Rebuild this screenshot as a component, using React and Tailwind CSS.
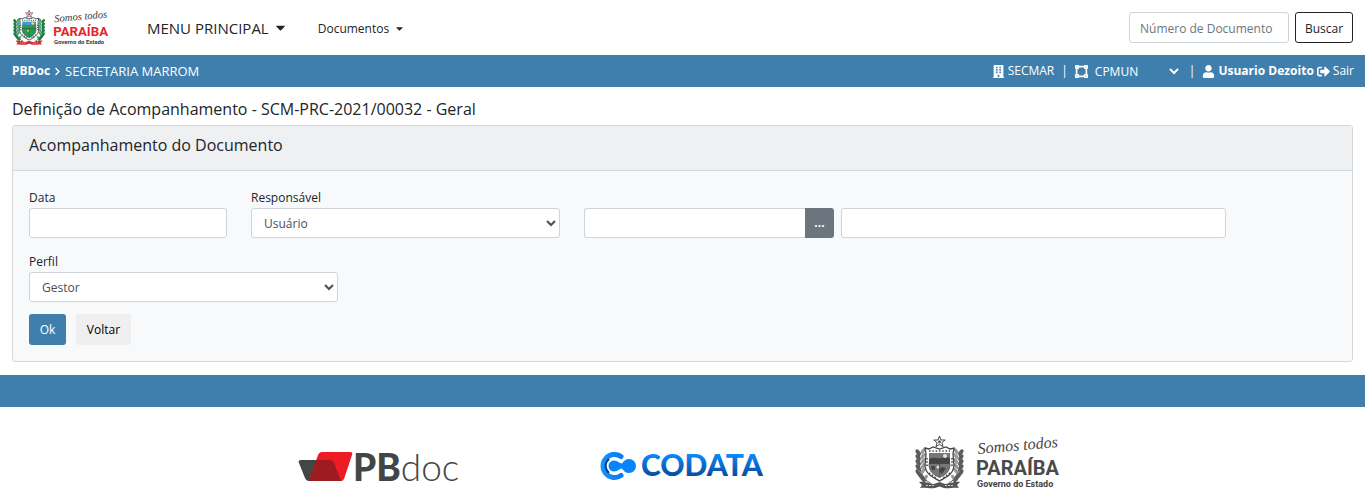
import { useState } from "react";
import {
  FaBuilding,
  FaCaretDown,
  FaChevronRight,
  FaSignOutAlt,
  FaUser,
  FaVectorSquare,
} from "react-icons/fa";

const fieldClass =
  "h-[30px] rounded-[3px] border border-[#ced4da] bg-white px-2 text-xs text-[#495057] outline-none focus:border-[#80bdff]";

export default function App() {
  const [form, setForm] = useState({
    data: "",
    responsavel: "usuario",
    sigla: "",
    nome: "",
    perfil: "gestor",
  });

  const update = (e) =>
    setForm((prev) => ({ ...prev, [e.target.name]: e.target.value }));

  return (
    <div className="min-h-screen bg-white font-['Open_Sans','Noto_Sans',sans-serif] text-xs leading-5 text-[#212529]">
      <Header />
      <UserBar />

      {/* ------------------- CONTENT ------------------- */}
      <main className="px-3 pt-[11px] pb-[13px]">
        <h1 className="mb-[5px] text-base leading-[22px] font-medium">
          Definição de Acompanhamento - SCM-PRC-2021/00032 - Geral
        </h1>

        <section className="rounded-[3px] border border-[#d5d8db] bg-[#f8f9fb]">
          <div className="border-b border-[#d5d8db] bg-[#eff0f2] px-4 pt-2 pb-[14px]">
            <h2 className="text-base leading-[22px] font-medium">
              Acompanhamento do Documento
            </h2>
          </div>

          <form className="px-4 pt-4 pb-4" onSubmit={(e) => e.preventDefault()}>
            <div className="flex flex-wrap items-end gap-x-6 gap-y-3">
              <Field label="Data" id="data" className="w-[198px]">
                <input
                  id="data"
                  name="data"
                  value={form.data}
                  onChange={update}
                  className={fieldClass}
                />
              </Field>

              <Field label="Responsável" id="responsavel" className="w-[309px]">
                <select
                  id="responsavel"
                  name="responsavel"
                  value={form.responsavel}
                  onChange={update}
                  className={fieldClass}
                >
                  <option value="usuario">Usuário</option>
                  <option value="lotacao">Lotação</option>
                </select>
              </Field>

              <div className="flex gap-[7px]">
                <div className="flex w-[250px]">
                  <input
                    name="sigla"
                    aria-label="Sigla do usuário"
                    value={form.sigla}
                    onChange={update}
                    className="h-[30px] min-w-0 flex-1 rounded-l-[3px] border border-r-0 border-[#ced4da] bg-white px-2 text-xs outline-none"
                  />
                  <button
                    type="button"
                    aria-label="Selecionar usuário"
                    className="w-[29px] rounded-r-[3px] bg-[#6c757d] font-bold text-white"
                  >
                    ...
                  </button>
                </div>
                <input
                  name="nome"
                  aria-label="Nome do usuário"
                  value={form.nome}
                  onChange={update}
                  className="h-[30px] w-[385px] rounded-[3px] border border-[#ced4da] bg-white px-2 text-xs outline-none"
                />
              </div>
            </div>

            <div className="mt-[13px] flex">
              <Field label="Perfil" id="perfil" className="w-[309px]">
                <select
                  id="perfil"
                  name="perfil"
                  value={form.perfil}
                  onChange={update}
                  className={fieldClass}
                >
                  <option value="gestor">Gestor</option>
                  <option value="interessado">Interessado</option>
                </select>
              </Field>
            </div>

            <div className="mt-3 flex gap-[10px]">
              <button
                type="submit"
                className="h-[31px] w-[37px] rounded-[3px] bg-[#3f7fae] text-white"
              >
                Ok
              </button>
              <button
                type="button"
                className="h-[31px] w-[55px] rounded-[3px] bg-[#efefef] text-black"
              >
                Voltar
              </button>
            </div>
          </form>
        </section>
      </main>

      {/* ------------------- FOOTER ------------------- */}
      <footer>
        <div className="h-8 bg-[#3f7fae]" />
        <div className="mx-auto grid max-w-[912px] grid-cols-3 items-center justify-items-center pt-[27px] pb-3">
          <div className="pt-2">
            <PbDocLogo />
          </div>
          <div className="pt-2">
            <CodataLogo />
          </div>
          <ParaibaLogo className="h-[56px] w-[146px]" mono />
        </div>
      </footer>
    </div>
  );
}

function Header() {
  return (
    <header className="flex h-[55px] items-center justify-between px-3">
      <nav className="flex items-center">
        <a href="#inicio" aria-label="Governo do Estado da Paraíba">
          <ParaibaLogo className="h-[37px] w-[97px]" />
        </a>
        <button className="ml-[38px] flex items-center gap-1 text-[15px]">
          MENU PRINCIPAL
          <FaCaretDown size={15} />
        </button>
        <button className="ml-[30px] flex items-center gap-[5px] pt-[2px]">
          Documentos
          <FaCaretDown size={11} />
        </button>
      </nav>

      <form className="flex gap-[6px]" onSubmit={(e) => e.preventDefault()}>
        <input
          aria-label="Número de Documento"
          placeholder="Número de Documento"
          className="h-[31px] w-40 rounded-[3px] border border-[#ced4da] px-[10px] pt-[2px] text-xs outline-none placeholder:text-[#6c757d]"
        />
        <button className="h-[31px] w-[58px] rounded-[3px] border border-[#212529] pt-[2px]">
          Buscar
        </button>
      </form>
    </header>
  );
}

function UserBar() {
  return (
    <div className="flex h-8 items-center justify-between bg-[#3f7fae] pr-[11px] pl-3 text-white">
      <div className="flex items-center gap-[3px]">
        <strong>PBDoc</strong>
        <FaChevronRight size={9} />
        <span className="text-[13px]">SECRETARIA MARROM</span>
      </div>

      <div className="flex items-center gap-[3px]">
        <FaBuilding size={13} />
        <span>SECMAR</span>
        <span className="mx-1">|</span>
        <FaVectorSquare size={13} />
        <select
          aria-label="Lotação"
          className="w-[91px] bg-transparent text-xs outline-none"
        >
          <option>CPMUN</option>
        </select>
        <span className="mx-1">|</span>
        <FaUser size={13} />
        <strong>Usuario Dezoito</strong>
        <FaSignOutAlt size={13} />
        <a href="#sair">Sair</a>
      </div>
    </div>
  );
}

/* LABEL ABOVE A CONTROL */
function Field({ label, id, className, children }) {
  return (
    <div className={`flex flex-col ${className}`}>
      <label htmlFor={id} className="leading-[21px]">
        {label}
      </label>
      {children}
    </div>
  );
}

/* ------------------- LOGOS ------------------- */
function ParaibaLogo({ className, mono = false }) {
  const c = mono
    ? {
        dark: "#444", leaf: "#5c5c5c", light: "#999", red: "#555", sky: "#777",
        hill: "#444", field: "#777", sun: "#e5e5e5", name: "#4a4a4a", ribbon: "#555",
      }
    : {
        dark: "#3c3c40", leaf: "#197d46", light: "#42a56a", red: "#d8232e", sky: "#3d9be0",
        hill: "#2c9b4b", field: "#1f9a58", sun: "#ffe23c", name: "#e8242c", ribbon: "#d92b36",
      };

  const leaves = [0, 1, 2, 3, 4, 5, 6];

  return (
    <svg viewBox="0 0 146 56" className={className} role="img" aria-label="Somos todos Paraíba">
      {/* side branches */}
      <path d="M17 50C7 44 3 32 6 18M34 50c10-6 14-18 11-32" fill="none" stroke={c.dark} />
      {leaves.map((i) => (
        <g key={i}>
          <ellipse cx={4 + (i > 4 ? (i - 4) * 3 : 0)} cy={18 + i * 5} rx="2" ry="3.6" fill={c.leaf} transform={`rotate(-35 5 ${18 + i * 5})`} />
          <ellipse cx={9 + (i > 4 ? (i - 4) * 3 : 0)} cy={17 + i * 5} rx="1.7" ry="3.4" fill={c.light} transform={`rotate(35 9 ${17 + i * 5})`} />
          <ellipse cx={47 - (i > 4 ? (i - 4) * 3 : 0)} cy={18 + i * 5} rx="2" ry="3.6" fill={c.leaf} transform={`rotate(35 46 ${18 + i * 5})`} />
          <ellipse cx={42 - (i > 4 ? (i - 4) * 3 : 0)} cy={17 + i * 5} rx="1.7" ry="3.4" fill={c.light} transform={`rotate(-35 42 ${17 + i * 5})`} />
        </g>
      ))}
      {/* star */}
      <path d="M25.500 2l1.500 4h4.200l-3.300 2.700 1.200 4-3.600-2.300-3.600 2.300 1.200-4L19.800 6H24z" fill="#fff" stroke={c.dark} strokeWidth="1" />
      <circle cx="25.500" cy="7.800" r="1.500" fill={c.red} />
      {/* shield */}
      <path d="M11 14l4 1 4-2 6.500 2 6.500-2 4 2 4-1-1 6 1 12c-1 8-7 11-14.500 15C18 43 12 40 11 32l1-12z" fill="#fff" stroke={c.dark} strokeWidth="1.300" />
      <path d="M15 17h21M13 24v9M38 24v9M15 39l7 5M36 39l-7 5" stroke={c.dark} strokeWidth="1.600" strokeDasharray="1.500 1.800" fill="none" />
      <path d="M15 19h21v11H15z" fill={c.sky} />
      <path d="M15 25c4-3 8 0 12-1s6-1 9 0v6H15z" fill={c.hill} />
      <circle cx="31" cy="22" r="2" fill={c.sun} />
      <path d="M15 29.500h21c0 8-4 11-10.500 14C19 40.500 15 37.500 15 29.500z" fill={c.field} stroke={c.dark} strokeWidth=".8" />
      <path d="M17 32h4v4h-3zM27 33l5 1-4 6-3-3z" fill={c.hill} />
      <circle cx="24" cy="33" r="1.500" fill={c.sun} />
      <path d="M25.500 30v12" stroke={c.dark} strokeWidth=".7" />
      {/* ribbon */}
      <path d="M5 48c6-1 9 2 15 2l5.500-2 5.500 2c6 0 9-3 15-2l-3 3 2 3c-6-1-10 1-15 0l-4.500-1.500L21 54c-5 1-9-1-15 0l2-3z" fill={c.ribbon} />
      <path d="M12 51.500h8M31 51.500h8" stroke="#fff" strokeWidth=".7" strokeDasharray="2 1" />

      <text x="64" y="20" fontSize="16" fontStyle="italic" fill={c.dark} fontFamily="'Liberation Serif', serif" transform="rotate(-5 64 20)">
        Somos todos
      </text>
      <text x="62" y="41" fontSize="20" fontWeight="700" fill={c.name} fontFamily="Roboto, sans-serif">
        PARAÍBA
      </text>
      <text x="63" y="53" fontSize="9" fontWeight="700" fill={c.dark} fontFamily="Roboto, sans-serif">
        Governo do Estado
      </text>
    </svg>
  );
}

function PbDocLogo() {
  return (
    <svg viewBox="0 -6 166 48" className="h-12 w-[166px]" role="img" aria-label="PBdoc">
      <path d="M5 12h31l9 21H13c-2 0-3-1-4-3L3 15c-1-2 0-3 2-3z" fill="#434646" />
      <path d="M26 4h28c2 0 3 1 2 3l-8 24c-1 1-1 2-3 2H13l9-26c1-2 2-3 4-3z" fill="#ed1c24" />
      <path d="M20 12h14c2 0 3 1 4 3l7 18H13z" fill="#9e1c20" />
      <text x="57" y="33" fontSize="37" fill="#434646" fontFamily="Lato, sans-serif">
        <tspan fontWeight="900">PB</tspan>
        <tspan fontWeight="300">doc</tspan>
      </text>
    </svg>
  );
}

function CodataLogo() {
  return (
    <svg viewBox="0 -6 172 44" className="h-11 w-[172px]" role="img" aria-label="Codata">
      <defs>
        <linearGradient id="codata-text" x1="0" y1="0" x2="0" y2="1">
          <stop offset="0.200" stopColor="#0a8cff" />
          <stop offset="0.800" stopColor="#0750a5" />
        </linearGradient>
        <linearGradient id="codata-ring" x1="0" y1="0" x2="1" y2="0">
          <stop offset="0" stopColor="#1592ff" />
          <stop offset="1" stopColor="#087cf0" />
        </linearGradient>
      </defs>
      <path d="M24 6.500A11.500 11.500 0 1 0 24 25.500" fill="none" stroke="url(#codata-ring)" strokeWidth="5" strokeLinecap="round" />
      <path d="M12 9a9 9 0 0 0 0 14" fill="none" stroke="#063f86" strokeWidth="2" />
      <path d="M17 10.500c4 0 5 3 8 3 2-3 4-4.500 7-4.500a7 7 0 0 1 0 14c-3 0-5-1.500-7-4.500-3 0-4 3-8 3a5.500 5.500 0 0 1 0-11z" fill="#0784fa" />
      <text x="44" y="26" fontSize="30" fontWeight="900" fill="url(#codata-text)" fontFamily="Lato, sans-serif">
        CODATA
      </text>
    </svg>
  );
}
